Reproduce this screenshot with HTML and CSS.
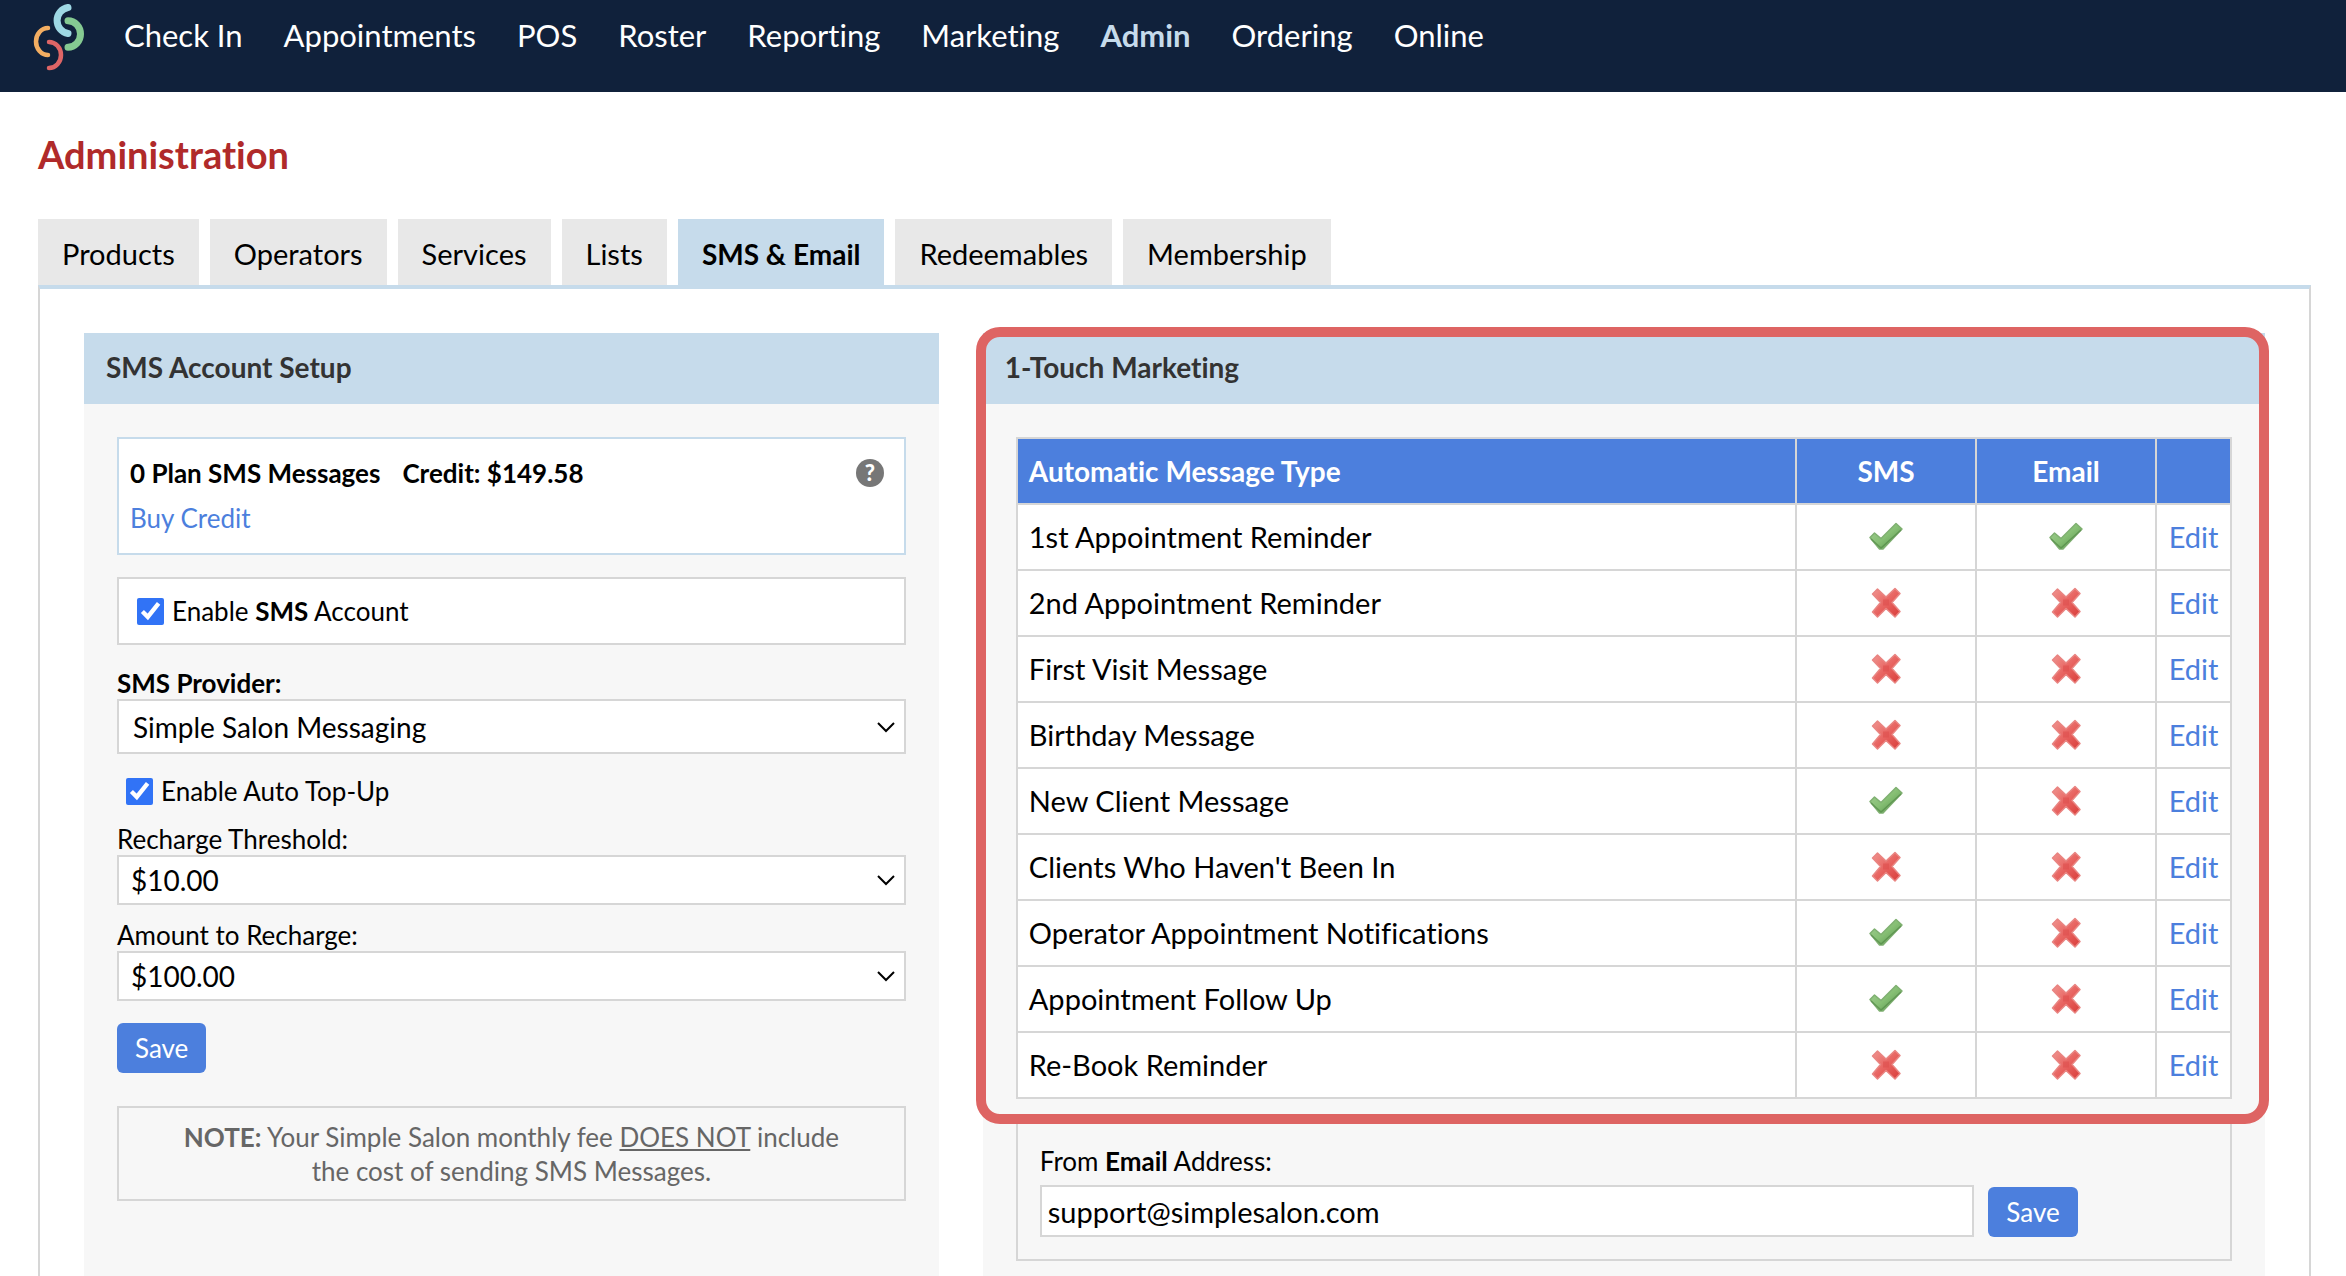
FILE: index.html
```html
<!DOCTYPE html>
<html lang="en">

<head>
    <meta charset="UTF-8">
    <meta name="viewport" content="width=device-width, initial-scale=1.0">
    <title>Administration - SMS &amp; Email</title>
    <link rel="stylesheet" href="styles.css">
</head>

<body>
    <!-- Shared icons -->
    <svg class="sprite" aria-hidden="true">
        <defs>
            <linearGradient id="green" x1="0" y1="0" x2="1" y2="1">
                <stop offset="0" stop-color="#a3cf93" />
                <stop offset="0.5" stop-color="#86bf74" />
                <stop offset="1" stop-color="#548f48" />
            </linearGradient>
            <linearGradient id="red" x1="0" y1="0" x2="1" y2="1">
                <stop offset="0" stop-color="#f09590" />
                <stop offset="0.5" stop-color="#e86562" />
                <stop offset="1" stop-color="#d93c38" />
            </linearGradient>
            <symbol id="tick" viewBox="0 0 36 32">
                <path d="M2 16.500 L6.500 12 L13 17.500 L28 2.500 L34 8 L15 28 L11.500 28 Z" fill="url(#green)" stroke="#7fb071" stroke-width="1.500" stroke-linejoin="round" />
                <path d="M3 18 L13 27 L33 9" fill="none" stroke="#4f8643" stroke-width="1.500" opacity="0.6" />
            </symbol>
            <symbol id="cross" viewBox="0 0 36 32">
                <path d="M4.500 7 L9.500 2 L18 10 L27 1.500 L32 6.500 L24 15.500 L32 24.500 L27 30 L18 21.500 L9.500 30 L4.500 25 L12.500 15.500 Z" fill="url(#red)" stroke="#e98582" stroke-width="1.500" stroke-linejoin="round" />
                <rect x="15" y="12.500" width="6" height="6" fill="#dd4f4c" opacity="0.6" />
            </symbol>
        </defs>
    </svg>

    <!-- Top navigation -->
    <header class="topbar">
        <a href="#" class="logo" aria-label="Home">
            <svg width="52" height="72" viewBox="0 0 52 72" fill="none" stroke-linecap="round">
                <path d="M36 7.500 A13.200 13.200 0 0 0 36 33.500" stroke="#9ed8e4" stroke-width="7" />
                <path d="M36 20.800 A12.500 13.200 0 0 1 36 47.200" stroke="#85ca92" stroke-width="7" />
                <path d="M16 28 A12 13.500 0 0 0 16 55" stroke="#f3ae62" stroke-width="4.500" />
                <path d="M17 42 A12 13 0 0 1 17 68" stroke="#de6566" stroke-width="4.500" />
            </svg>
        </a>
        <nav class="main-nav">
            <a href="#">Check In</a>
            <a href="#">Appointments</a>
            <a href="#">POS</a>
            <a href="#">Roster</a>
            <a href="#">Reporting</a>
            <a href="#">Marketing</a>
            <a href="#" class="active">Admin</a>
            <a href="#">Ordering</a>
            <a href="#">Online</a>
        </nav>
    </header>

    <main class="page">
        <h1>Administration</h1>

        <!-- Tabs -->
        <nav class="tabs">
            <a href="#">Products</a>
            <a href="#">Operators</a>
            <a href="#">Services</a>
            <a href="#">Lists</a>
            <a href="#" class="active">SMS &amp; Email</a>
            <a href="#">Redeemables</a>
            <a href="#">Membership</a>
        </nav>

        <div class="tab-content">
            <!-- SMS Account Setup -->
            <section class="panel panel-sms">
                <h2>SMS Account Setup</h2>
                <form class="panel-body">
                    <div class="credit-box">
                        <div class="credit-info">
                            <p><b>0 Plan SMS Messages</b><b>Credit: $149.58</b></p>
                            <a href="#">Buy Credit</a>
                        </div>
                        <button type="button" class="help" aria-label="Help">?</button>
                    </div>

                    <label class="check check-box">
                        <input type="checkbox" checked>
                        <span>Enable <b>SMS</b> Account</span>
                    </label>

                    <label class="field-label" for="provider"><b>SMS Provider:</b></label>
                    <select id="provider" class="provider">
                        <option>Simple Salon Messaging</option>
                    </select>

                    <label class="check check-topup">
                        <input type="checkbox" checked>
                        <span>Enable Auto Top-Up</span>
                    </label>

                    <label class="field-label" for="threshold">Recharge Threshold:</label>
                    <select id="threshold">
                        <option>$10.00</option>
                    </select>

                    <label class="field-label" for="amount">Amount to Recharge:</label>
                    <select id="amount">
                        <option>$100.00</option>
                    </select>

                    <button type="submit" class="button">Save</button>

                    <p class="note"><b>NOTE:</b> Your Simple Salon monthly fee <u>DOES NOT</u> include<br>the cost of sending SMS Messages.</p>
                </form>
            </section>

            <!-- 1-Touch Marketing -->
            <section class="panel panel-marketing">
                <div class="highlight">
                    <h2>1-Touch Marketing</h2>
                    <div class="table-wrap">
                        <table>
                            <thead>
                                <tr>
                                    <th class="type">Automatic Message Type</th>
                                    <th class="state">SMS</th>
                                    <th class="state">Email</th>
                                    <th class="edit"></th>
                                </tr>
                            </thead>
                            <tbody>
                                <tr>
                                    <td>1st Appointment Reminder</td>
                                    <td><svg class="icon" role="img" aria-label="On"><use href="#tick" /></svg></td>
                                    <td><svg class="icon" role="img" aria-label="On"><use href="#tick" /></svg></td>
                                    <td><a href="#">Edit</a></td>
                                </tr>
                                <tr>
                                    <td>2nd Appointment Reminder</td>
                                    <td><svg class="icon" role="img" aria-label="Off"><use href="#cross" /></svg></td>
                                    <td><svg class="icon" role="img" aria-label="Off"><use href="#cross" /></svg></td>
                                    <td><a href="#">Edit</a></td>
                                </tr>
                                <tr>
                                    <td>First Visit Message</td>
                                    <td><svg class="icon" role="img" aria-label="Off"><use href="#cross" /></svg></td>
                                    <td><svg class="icon" role="img" aria-label="Off"><use href="#cross" /></svg></td>
                                    <td><a href="#">Edit</a></td>
                                </tr>
                                <tr>
                                    <td>Birthday Message</td>
                                    <td><svg class="icon" role="img" aria-label="Off"><use href="#cross" /></svg></td>
                                    <td><svg class="icon" role="img" aria-label="Off"><use href="#cross" /></svg></td>
                                    <td><a href="#">Edit</a></td>
                                </tr>
                                <tr>
                                    <td>New Client Message</td>
                                    <td><svg class="icon" role="img" aria-label="On"><use href="#tick" /></svg></td>
                                    <td><svg class="icon" role="img" aria-label="Off"><use href="#cross" /></svg></td>
                                    <td><a href="#">Edit</a></td>
                                </tr>
                                <tr>
                                    <td>Clients Who Haven't Been In</td>
                                    <td><svg class="icon" role="img" aria-label="Off"><use href="#cross" /></svg></td>
                                    <td><svg class="icon" role="img" aria-label="Off"><use href="#cross" /></svg></td>
                                    <td><a href="#">Edit</a></td>
                                </tr>
                                <tr>
                                    <td>Operator Appointment Notifications</td>
                                    <td><svg class="icon" role="img" aria-label="On"><use href="#tick" /></svg></td>
                                    <td><svg class="icon" role="img" aria-label="Off"><use href="#cross" /></svg></td>
                                    <td><a href="#">Edit</a></td>
                                </tr>
                                <tr>
                                    <td>Appointment Follow Up</td>
                                    <td><svg class="icon" role="img" aria-label="On"><use href="#tick" /></svg></td>
                                    <td><svg class="icon" role="img" aria-label="Off"><use href="#cross" /></svg></td>
                                    <td><a href="#">Edit</a></td>
                                </tr>
                                <tr>
                                    <td>Re-Book Reminder</td>
                                    <td><svg class="icon" role="img" aria-label="Off"><use href="#cross" /></svg></td>
                                    <td><svg class="icon" role="img" aria-label="Off"><use href="#cross" /></svg></td>
                                    <td><a href="#">Edit</a></td>
                                </tr>
                            </tbody>
                        </table>
                    </div>
                </div>

                <form class="email-box">
                    <label for="from-email">From <b>Email</b> Address:</label>
                    <div class="email-row">
                        <input type="text" id="from-email" value="support@simplesalon.com">
                        <button type="submit" class="button">Save</button>
                    </div>
                </form>
            </section>
        </div>
    </main>
</body>

</html>
```

FILE: styles.css
```css
* {
    box-sizing: border-box;
}

body {
    margin: 0;
    font-family: Lato, sans-serif;
    font-size: 26px;
    font-variant-ligatures: none;
    line-height: 34px;
    color: #000;
    background: #fff;
}

a {
    color: #4c7fdd;
    text-decoration: none;
}

h1,
h2,
p {
    margin: 0;
}

.sprite {
    position: absolute;
    width: 0;
    height: 0;
}

/* Top navigation */
.topbar {
    display: flex;
    align-items: flex-start;
    gap: 40px;
    height: 92px;
    padding-left: 32px;
    background: #10213b;
}

.logo svg {
    display: block;
}

.main-nav {
    display: flex;
    gap: 41px;
    padding-top: 17px;
    font-size: 31px;
    line-height: 36px;
}

.main-nav a {
    color: #fff;
}

.main-nav a.active {
    color: #c6dbeb;
    font-weight: bold;
}

/* Page */
.page {
    padding: 38px 35px 0 38px;
}

h1 {
    margin-bottom: 41px;
    font-size: 38px;
    line-height: 48px;
    color: #b02a2a;
}

/* Tabs */
.tabs {
    display: flex;
    gap: 11px;
    font-size: 29px;
    line-height: 34px;
}

.tabs a {
    padding: 18px 24px 14px;
    color: #000;
    background: #e8e8e8;
}

.tabs a.active {
    font-size: 28px;
    font-weight: bold;
    background: #c6dbeb;
}

.tab-content {
    display: flex;
    gap: 44px;
    padding: 44px 44px 0;
    border: 2px solid #d6d6d6;
    border-top: 4px solid #c6dbeb;
    border-bottom: none;
}

/* Panels */
.panel {
    min-width: 0;
    background: #f7f7f7;
}

.panel-sms {
    flex: 2;
}

.panel-marketing {
    flex: 3;
    padding-bottom: 33px;
}

.panel h2 {
    padding: 16px 22px 19px;
    font-size: 28px;
    line-height: 36px;
    color: #333;
    background: #c6dbeb;
}

.panel-body {
    padding: 33px;
}

.credit-box {
    display: flex;
    justify-content: space-between;
    align-items: flex-start;
    height: 118px;
    margin-bottom: 22px;
    padding: 12px 20px 0 11px;
    border: 2px solid #c6dbeb;
    background: #fff;
}

.credit-info {
    line-height: 45px;
}

.credit-info p {
    display: flex;
    gap: 22px;
}

.credit-info a {
    display: block;
}

.help {
    width: 28px;
    height: 28px;
    margin-top: 8px;
    padding: 0;
    border: none;
    border-radius: 50%;
    font-family: inherit;
    font-size: 22px;
    font-weight: 900;
    line-height: 28px;
    color: #fff;
    background: #777;
}

.check {
    display: flex;
    align-items: center;
    gap: 8px;
}

.check input {
    width: 27px;
    height: 27px;
    margin: 0;
    accent-color: #3173f6;
}

.check-box {
    height: 68px;
    margin-bottom: 22px;
    padding-left: 18px;
    border: 2px solid #d6d6d6;
    background: #fff;
}

.check-topup {
    margin: 20px 0 15px;
    padding-left: 9px;
}

.field-label {
    display: block;
    line-height: 32px;
}

select {
    display: block;
    width: 100%;
    height: 50px;
    margin-bottom: 14px;
    padding: 0 12px;
    border: 2px solid #d6d6d6;
    border-radius: 0;
    font-family: inherit;
    font-size: 28px;
    color: #000;
    appearance: none;
    background: #fff url("data:image/svg+xml,%3Csvg xmlns='http://www.w3.org/2000/svg' width='20' height='12' fill='none' stroke='%23000' stroke-width='2'%3E%3Cpath d='M2 2l8 8 8-8'/%3E%3C/svg%3E") no-repeat right 8px center;
}

.provider {
    height: 55px;
    padding: 0 14px;
}

.button {
    height: 50px;
    padding: 0 18px;
    border: none;
    border-radius: 6px;
    font-family: inherit;
    font-size: 26px;
    color: #fff;
    background: #4c7fdd;
    cursor: pointer;
}

.panel-body .button {
    display: block;
    margin-top: 22px;
}

.note {
    margin-top: 33px;
    padding: 12px 20px 11px;
    border: 2px solid #d6d6d6;
    text-align: center;
    color: #666;
}

/* Red frame round the message table */
.highlight {
    position: relative;
}

.highlight::after {
    content: "";
    position: absolute;
    inset: -6px -4px -25px -7px;
    border: 10px solid #de6463;
    border-radius: 24px;
    pointer-events: none;
}

.table-wrap {
    padding: 33px 33px 0;
}

table {
    width: 100%;
    table-layout: fixed;
    border-collapse: collapse;
    font-size: 29px;
    background: #fff;
}

th,
td {
    height: 66px;
    padding: 0 11px;
    border: 2px solid #d6d6d6;
    text-align: center;
}

th {
    font-size: 28px;
    color: #fff;
    background: #4c7fdd;
}

th:first-child,
td:first-child {
    text-align: left;
}

th.state {
    width: 180px;
}

th.edit {
    width: 75px;
}

.icon {
    display: block;
    width: 36px;
    height: 32px;
    margin: 0 auto;
}

/* From address */
.email-box {
    margin: 22px 33px 0;
    padding: 21px 22px 22px;
    border: 2px solid #d6d6d6;
}

.email-box label {
    display: block;
    margin-bottom: 7px;
}

.email-row {
    display: flex;
    align-items: flex-end;
    gap: 14px;
}

.email-row input {
    width: 80%;
    height: 52px;
    padding: 0 6px;
    border: 2px solid #d6d6d6;
    font-family: inherit;
    font-size: 29px;
    color: #000;
}
```
